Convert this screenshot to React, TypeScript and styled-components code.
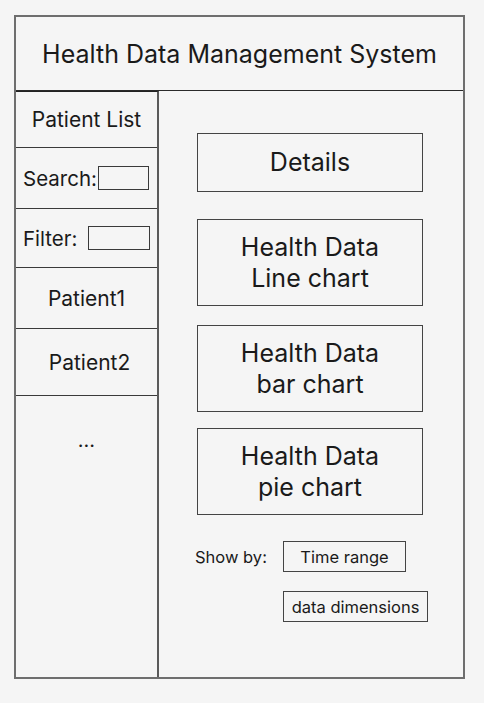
import styled, { createGlobalStyle } from "styled-components";

const GlobalStyle = createGlobalStyle`
  html, body {
    margin: 0;
    padding: 0;
    background: #f5f5f5;
  }
  body {
    font-family: "Inter", "Noto Sans", sans-serif;
    color: #1a1a1a;
  }
`;

const Frame = styled.div`
  box-sizing: border-box;
  margin: 15px 0 0 14px;
  width: 451px;
  height: 664px;
  border: 2px solid #6e6e6e;
  display: flex;
  flex-direction: column;
`;

const Header = styled.header`
  height: 73px;
  flex-shrink: 0;
  display: flex;
  align-items: center;
  justify-content: center;
  font-size: 25px;
  border-bottom: 1px solid #2a2a2a;
`;

const Body = styled.div`
  flex: 1;
  display: flex;
`;

const Sidebar = styled.aside`
  width: 141px;
  flex-shrink: 0;
  border-top: 1px solid #222;
  border-right: 2px solid #5a5a5a;
  display: flex;
  flex-direction: column;
`;

const SideRow = styled.div<{ $h: number; $shift?: number }>`
  box-sizing: border-box;
  height: ${(p) => p.$h}px;
  border-bottom: 1px solid #3a3a3a;
  display: flex;
  align-items: center;
  justify-content: center;
  font-size: 21px;
  padding-left: ${(p) => p.$shift ?? 0}px;
`;

const FieldRow = styled.div<{ $h: number }>`
  box-sizing: border-box;
  height: ${(p) => p.$h}px;
  border-bottom: 1px solid #3a3a3a;
  display: flex;
  align-items: center;
  padding-left: 7px;
  font-size: 20.5px;
`;

const FieldBox = styled.span<{ $gap: number; $w: number }>`
  box-sizing: border-box;
  display: inline-block;
  width: ${(p) => p.$w}px;
  height: 24px;
  margin-left: ${(p) => p.$gap}px;
  border: 1px solid #3a3a3a;
`;

const More = styled.div`
  padding-top: 32px;
  text-align: center;
  font-size: 20px;
`;

const Main = styled.main`
  flex: 1;
  display: flex;
  flex-direction: column;
  padding: 42px 0 0 38px;
`;

const Card = styled.div<{ $h: number; $top: number }>`
  box-sizing: border-box;
  width: 226px;
  height: ${(p) => p.$h}px;
  margin-top: ${(p) => p.$top}px;
  border: 1px solid #444;
  display: flex;
  align-items: center;
  justify-content: center;
  text-align: center;
  font-size: 25px;
  line-height: 31px;
`;

const ShowBy = styled.div`
  display: grid;
  grid-template-columns: 88px auto;
  row-gap: 19px;
  align-items: center;
  margin: 26px 0 0 -2px;
  font-size: 16.5px;
`;

const Chip = styled.span<{ $w: number }>`
  box-sizing: border-box;
  grid-column: 2;
  width: ${(p) => p.$w}px;
  height: 31px;
  border: 1px solid #444;
  display: flex;
  align-items: center;
  justify-content: center;
  font-size: 16.5px;
`;

export default function App() {
  return (
    <>
      <GlobalStyle />
      <Frame>
        <Header>Health Data Management System</Header>
        <Body>
          <Sidebar>
            <SideRow $h={56}>Patient List</SideRow>
            <FieldRow $h={61}>
              Search:<FieldBox $gap={1} $w={51} />
            </FieldRow>
            <FieldRow $h={59}>
              Filter:<FieldBox $gap={11} $w={62} />
            </FieldRow>
            <SideRow $h={61}>Patient1</SideRow>
            <SideRow $h={67} $shift={6}>
              Patient2
            </SideRow>
            <More>...</More>
          </Sidebar>
          <Main>
            <Card $h={59} $top={0}>Details</Card>
            <Card $h={87} $top={27}>
              Health Data
              <br />
              Line chart
            </Card>
            <Card $h={87} $top={19}>
              Health Data
              <br />
              bar chart
            </Card>
            <Card $h={87} $top={16}>
              Health Data
              <br />
              pie chart
            </Card>
            <ShowBy>
              <span>Show by:</span>
              <Chip $w={123}>Time range</Chip>
              <Chip $w={145}>data dimensions</Chip>
            </ShowBy>
          </Main>
        </Body>
      </Frame>
    </>
  );
}
